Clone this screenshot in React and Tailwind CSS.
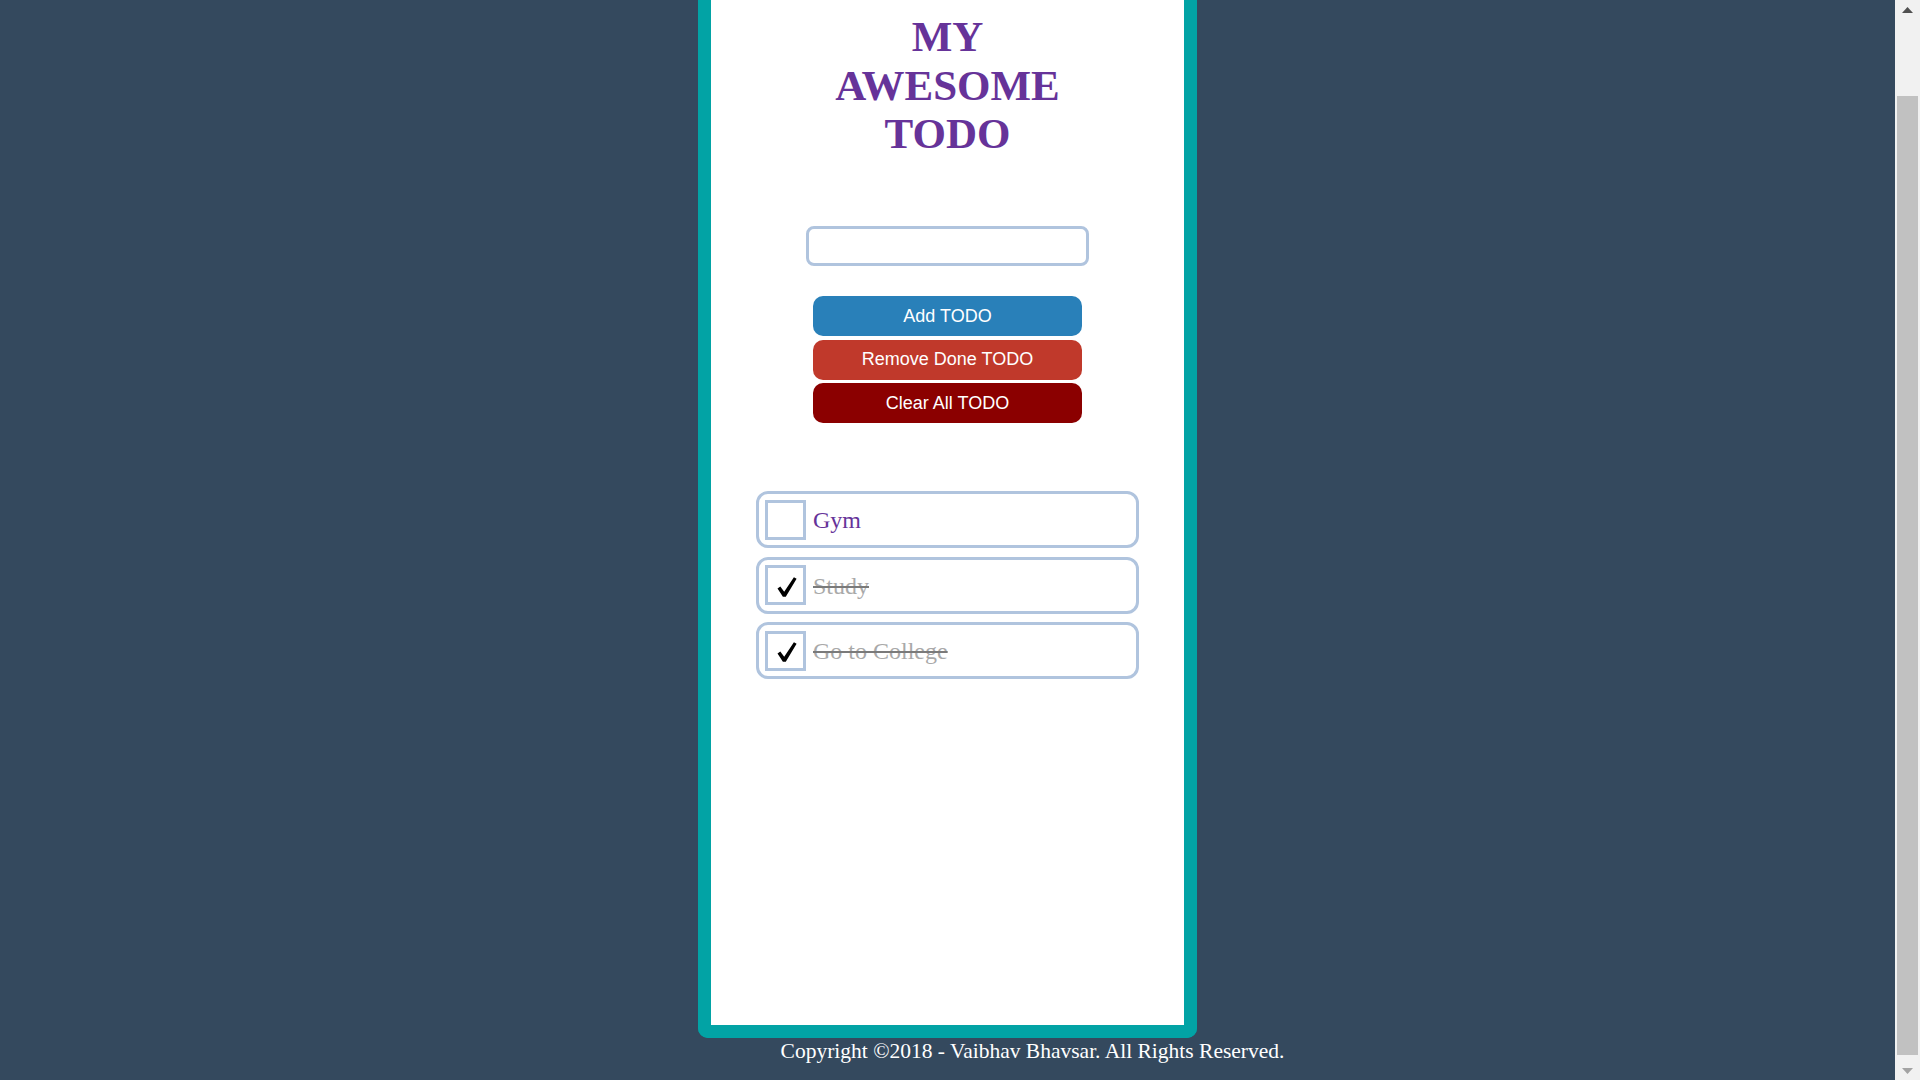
import React from "react";

const todos = [
  { text: "Gym", done: false },
  { text: "Study", done: true },
  { text: "Go to College", done: true },
];

function Check() {
  return (
    <svg width="20" height="20" viewBox="0 0 20 20" className="mt-[3px] ml-[3px]">
      <path d="M0.5 11.5 L3.3 9.6 L7.2 14.8 L16.9 0.3 L19.6 1.8 L8.8 19.8 L5.9 19.8 Z" fill="#000" />
    </svg>
  );
}

function TodoItem({ text, done }) {
  return (
    <div className="flex items-center h-[57px] w-[383px] border-[3px] border-[#b0c4de] rounded-[12px] pl-[6px] bg-white">
      <div className="flex items-center justify-center w-[41px] h-[40px] border-[3px] border-[#b0c4de] shrink-0">
        {done && <Check />}
      </div>
      <span
        className={
          done
            ? "ml-[7px] mt-[1px] text-[24px] text-[#a9a9a9] line-through decoration-[#7a7a7a]"
            : "ml-[7px] mt-[1px] text-[24px] text-[#663399]"
        }
        style={{ fontFamily: '"Liberation Serif", "Times New Roman", serif' }}
      >
        {text}
      </span>
    </div>
  );
}

export default function App() {
  return (
    <div className="flex h-screen w-full overflow-hidden bg-[#34495e]">
      <div className="flex-1 flex flex-col items-center">
        <div className="w-[499px] border-x-[13px] border-b-[13px] border-[#02a3a5] rounded-b-[10px] bg-white">
          <div className="h-[1025px] flex flex-col items-center">
            <h1
              className="pt-[13px] w-[260px] text-center text-[43px] leading-[48.5px] font-bold text-[#663399]"
              style={{ fontFamily: '"Liberation Serif", "Times New Roman", serif' }}
            >
              MY AWESOME TODO
            </h1>

            <input
              type="text"
              className="mt-[67.5px] w-[283px] h-[40px] border-[3px] border-[#b0c4de] rounded-[8px] bg-white outline-none"
            />

            <div
              className="mt-[30px] flex flex-col gap-[3.5px] text-[18px] text-white"
              style={{ fontFamily: '"Liberation Sans", Arial, sans-serif' }}
            >
              <button className="w-[269px] h-[40px] rounded-[10px] bg-[#2980b9]">Add TODO</button>
              <button className="w-[269px] h-[40px] rounded-[10px] bg-[#c0392b]">Remove Done TODO</button>
              <button className="w-[269px] h-[40px] rounded-[10px] bg-[#8b0000]">Clear All TODO</button>
            </div>

            <div className="mt-[68px] flex flex-col gap-[8.5px]">
              {todos.map((t) => (
                <TodoItem key={t.text} text={t.text} done={t.done} />
              ))}
            </div>
          </div>
        </div>

        <p
          className="-mt-[3px] w-full pl-[170px] text-center text-[21.5px] text-white"
          style={{ fontFamily: '"Liberation Serif", "Times New Roman", serif' }}
        >
          Copyright ©2018 - Vaibhav Bhavsar. All Rights Reserved.
        </p>
      </div>

      {/* fake browser scrollbar, page was scrolled to bottom */}
      <div className="w-[25px] h-full flex flex-col bg-[#f1f1f1]">
        <div className="h-[17px] flex items-center justify-center pt-[2px]">
          <svg width="11" height="6" viewBox="0 0 11 6">
            <path d="M5.5 0 L11 6 L0 6 Z" fill="#505050" />
          </svg>
        </div>
        <div className="flex-1 pt-[79px] pb-[8px] px-[2px] flex flex-col">
          <div className="flex-1 bg-[#c1c1c1]" />
        </div>
        <div className="h-[17px] flex items-center justify-center pb-[2px]">
          <svg width="11" height="6" viewBox="0 0 11 6">
            <path d="M0 0 L11 0 L5.5 6 Z" fill="#a3a3a3" />
          </svg>
        </div>
      </div>
    </div>
  );
}
